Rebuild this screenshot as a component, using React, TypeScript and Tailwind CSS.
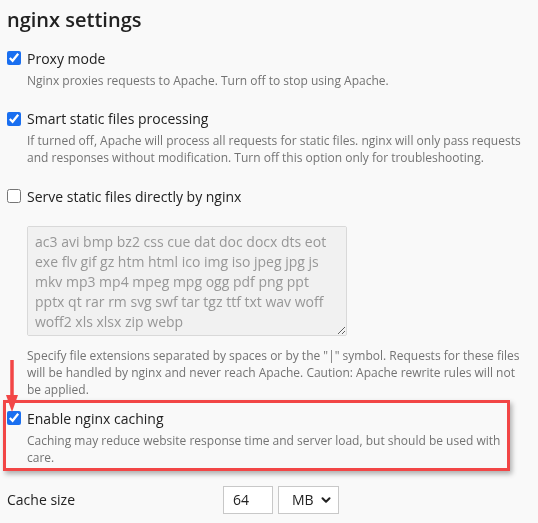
import { ChevronDown } from "lucide-react";

const extensions =
    "ac3 avi bmp bz2 css cue dat doc docx dts eot exe flv gif gz htm html ico img iso jpeg jpg js mkv mp3 mp4 mpeg mpg ogg pdf png ppt pptx qt rar rm svg swf tar tgz ttf txt wav woff woff2 xls xlsx zip webp";

function Option({
    label,
    checked,
    descWidth = "max-w-[500px]",
    children,
}: {
    label: string;
    checked: boolean;
    descWidth?: string;
    children?: React.ReactNode;
}) {
    return (
        <div>
            <label className="flex items-center h-5 text-[14px] text-[#222]">
                <input
                    type="checkbox"
                    defaultChecked={checked}
                    className="w-[14px] h-[14px] ml-[7px] mr-[6px] accent-[#1a6ff0]"
                />
                {label}
            </label>
            {children && (
                <div className={`ml-[27px] mt-[3.5px] ${descWidth} text-[12px] leading-[17px] text-[#737373]`}>
                    {children}
                </div>
            )}
        </div>
    );
}

export default function App() {
    return (
        <div className="min-h-[523px] bg-[#f9f9f9] font-['Open_Sans',sans-serif] pt-[6px] overflow-hidden">
            <h1 className="ml-[7px] text-[20px] leading-[28px] font-semibold text-[#222]">nginx settings</h1>

            <div className="mt-[14px]">
                <Option label="Proxy mode" checked>
                    Nginx proxies requests to Apache. Turn off to stop using Apache.
                </Option>
            </div>

            <div className="mt-[20px]">
                <Option label="Smart static files processing" checked descWidth="max-w-[505px]">
                    If turned off, Apache will process all requests for static files. nginx will only pass requests and
                    responses without modification. Turn off this option only for troubleshooting.
                </Option>
            </div>

            <div className="mt-[20px]">
                <Option label="Serve static files directly by nginx" checked={false} />
                <textarea
                    disabled
                    defaultValue={extensions}
                    className="block ml-[27px] mt-[20px] w-[320px] h-[110px] px-[7px] py-[5px] text-[14px] leading-[20px] text-[#979797] bg-[#f1f1f1] border border-[#d9d9d9] rounded-[2px] resize"
                />
                <p className="ml-[27px] mt-[11px] max-w-[500px] text-[12px] leading-[17px] text-[#737373]">
                    Specify file extensions separated by spaces or by the "|" symbol. Requests for these files will be
                    handled by nginx and never reach Apache. Caution: Apache rewrite rules will not be applied.
                </p>
            </div>

            {/* highlighted section */}
            <div className="relative mt-[10px]">
                <Option label="Enable nginx caching" checked descWidth="max-w-[485px]">
                    Caching may reduce website response time and server load, but should be used with care.
                </Option>
                <div className="absolute left-[3px] top-[-8px] w-[507px] h-[71px] border-[3px] border-[#f24646] shadow-[2px_3px_5px_rgba(0,0,0,0.3)] pointer-events-none" />
                <svg className="absolute left-[6px] top-[-48px]" width="12" height="52" viewBox="0 0 12 52">
                    <rect x="4.25" y="0" width="3.5" height="38" fill="#f24646" />
                    <polygon points="0,35 12,35 6,52" fill="#f24646" />
                </svg>
            </div>

            <div className="flex items-center mt-[20px] h-[28px]">
                <span className="ml-[7px] w-[216px] text-[14px] text-[#222]">Cache size</span>
                <div className="w-[50px] h-[28px] border border-[#c8c8c8] bg-white flex items-center px-[9px] text-[14px] text-[#222]">
                    64
                </div>
                <div className="ml-[5px] w-[61px] h-[28px] border border-[#c8c8c8] bg-white flex items-center justify-between pl-[13px] pr-[5px] text-[14px] text-[#222]">
                    MB
                    <ChevronDown className="w-[14px] h-[14px] text-[#222]" strokeWidth={3.5} />
                </div>
            </div>
        </div>
    );
}
